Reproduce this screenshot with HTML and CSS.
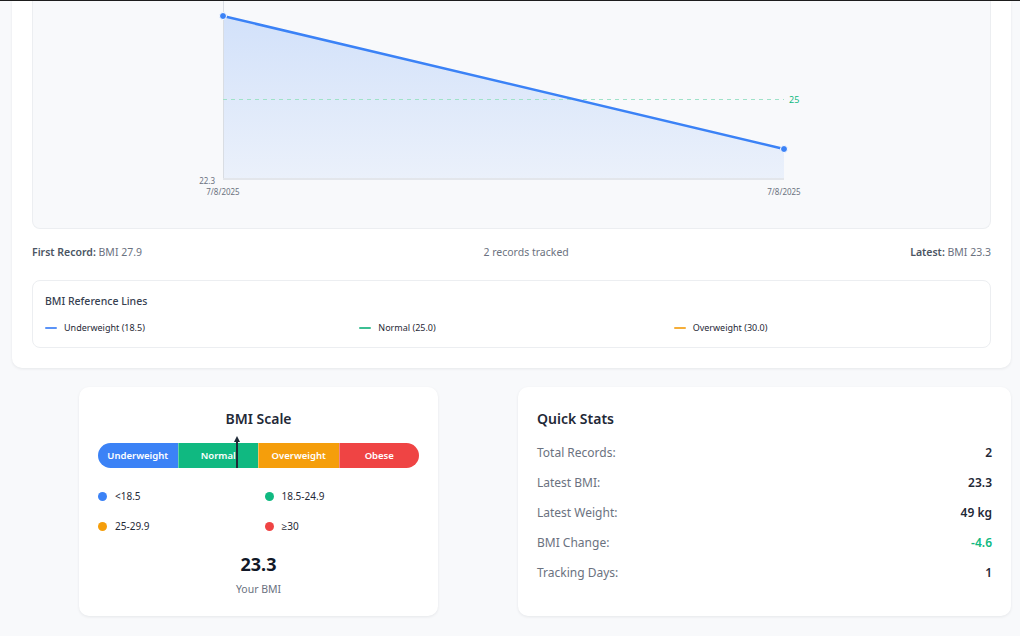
FILE: index.html
```html
<!DOCTYPE html>
<html lang="en">
<head>
<meta charset="utf-8">
<title>BMI Progress</title>
<link rel="stylesheet" href="styles.css">
</head>
<body>
<div class="topbar"></div>
<main class="page">
  <section class="card main-card">
    <div class="chart-box">
      <svg class="chart" width="958" height="227" viewBox="0 0 958 227" xmlns="http://www.w3.org/2000/svg">
        <defs>
          <linearGradient id="fillGrad" x1="0" y1="0" x2="0" y2="1">
            <stop offset="0" stop-color="#3b82f6" stop-opacity="0.2"/>
            <stop offset="1" stop-color="#3b82f6" stop-opacity="0.07"/>
          </linearGradient>
        </defs>
        <polygon points="190,15 751,148 751,177 190,177" fill="url(#fillGrad)"/>
        <line x1="190.5" y1="0" x2="190.5" y2="178" stroke="#d9dde3" stroke-width="1"/>
        <line x1="190" y1="178" x2="751" y2="178" stroke="#e3e6eb" stroke-width="2"/>
        <line x1="190" y1="98.5" x2="751" y2="98.5" stroke="#9fe2c9" stroke-width="1.2" stroke-dasharray="4 4"/>
        <text x="756" y="102" class="ref-label">25</text>
        <polyline points="190,15 751,148" fill="none" stroke="#3b82f6" stroke-width="2.5" stroke-linecap="round"/>
        <circle cx="190" cy="15" r="3.5" fill="#3b82f6" stroke="#ffffff" stroke-width="1"/>
        <circle cx="751" cy="148" r="3.5" fill="#3b82f6" stroke="#ffffff" stroke-width="1"/>
        <text x="182" y="183" class="axis-label" text-anchor="end">22.3</text>
        <text x="190" y="194" class="axis-label" text-anchor="middle">7/8/2025</text>
        <text x="751" y="194" class="axis-label" text-anchor="middle">7/8/2025</text>
      </svg>
    </div>

    <div class="chart-footer">
      <span><strong>First Record:</strong> BMI 27.9</span>
      <span>2 records tracked</span>
      <span><strong>Latest:</strong> BMI 23.3</span>
    </div>

    <div class="ref-box">
      <h4 class="ref-title">BMI Reference Lines</h4>
      <div class="ref-legend">
        <div class="ref-item"><span class="ref-line blue"></span>Underweight (18.5)</div>
        <div class="ref-item"><span class="ref-line green"></span>Normal (25.0)</div>
        <div class="ref-item"><span class="ref-line orange"></span>Overweight (30.0)</div>
      </div>
    </div>
  </section>

  <div class="bottom-grid">
    <section class="card scale-card">
      <h3 class="card-title center">BMI Scale</h3>
      <div class="scale-bar-wrap">
        <div class="scale-bar">
          <div class="seg seg-under">Underweight</div>
          <div class="seg seg-normal">Normal</div>
          <div class="seg seg-over">Overweight</div>
          <div class="seg seg-obese">Obese</div>
        </div>
        <div class="marker" style="left: 43.3%;">
          <span class="marker-head"></span>
          <span class="marker-stem"></span>
        </div>
      </div>
      <div class="scale-legend">
        <div class="leg-item"><span class="dot blue"></span>&lt;18.5</div>
        <div class="leg-item"><span class="dot green"></span>18.5-24.9</div>
        <div class="leg-item"><span class="dot orange"></span>25-29.9</div>
        <div class="leg-item"><span class="dot red"></span>≥30</div>
      </div>
      <div class="your-bmi">23.3</div>
      <div class="your-bmi-label">Your BMI</div>
    </section>

    <section class="card stats-card">
      <h3 class="card-title">Quick Stats</h3>
      <ul class="stats-list">
        <li><span class="stat-label">Total Records:</span><span class="stat-value">2</span></li>
        <li><span class="stat-label">Latest BMI:</span><span class="stat-value">23.3</span></li>
        <li><span class="stat-label">Latest Weight:</span><span class="stat-value">49 kg</span></li>
        <li><span class="stat-label">BMI Change:</span><span class="stat-value positive">-4.6</span></li>
        <li><span class="stat-label">Tracking Days:</span><span class="stat-value">1</span></li>
      </ul>
    </section>
  </div>
</main>
</body>
</html>
```
FILE: styles.css
```css
* { box-sizing: border-box; }

html, body {
  margin: 0;
  padding: 0;
}

body {
  background: #f8f9fb;
  font-family: "Noto Sans", "Open Sans", "Liberation Sans", sans-serif;
  color: #1f2937;
  height: 636px;
  overflow: hidden;
}

.topbar {
  height: 1px;
  background: #1e1e1e;
}

.page {
  padding: 0 9px 0 12px;
}

.card {
  background: #ffffff;
  border-radius: 10px;
  box-shadow: 0 1px 3px rgba(15, 23, 42, 0.08);
}

.main-card {
  border-radius: 0 0 10px 10px;
  padding: 0 20px 20px;
}

.chart-box {
  height: 228px;
  background: #f8f9fb;
  border: 1px solid #eceef1;
  border-top: none;
  border-radius: 0 0 8px 8px;
  overflow: hidden;
}

.chart {
  display: block;
}

.axis-label {
  font-family: "Noto Sans", "Open Sans", sans-serif;
  font-size: 8px;
  fill: #6b7280;
}

.ref-label {
  font-family: "Noto Sans", "Open Sans", sans-serif;
  font-size: 9px;
  fill: #10b981;
}

.chart-footer {
  margin-top: 16px;
  display: flex;
  justify-content: space-between;
  font-size: 10.5px;
  line-height: 14px;
  color: #6b7280;
}

.chart-footer strong {
  color: #4b5563;
  font-weight: 600;
}

.ref-box {
  margin-top: 21px;
  border: 1px solid #eceef1;
  border-radius: 8px;
  padding: 12px;
}

.ref-title {
  margin: 0;
  font-size: 10.5px;
  line-height: 16px;
  font-weight: 500;
  color: #374151;
}

.ref-legend {
  margin-top: 12px;
  display: grid;
  grid-template-columns: repeat(3, 1fr);
  column-gap: 10px;
}

.ref-item {
  display: flex;
  align-items: center;
  gap: 7px;
  font-size: 9px;
  line-height: 14px;
  color: #1f2937;
}

.ref-line {
  display: inline-block;
  width: 12px;
  height: 1.5px;
  border-radius: 1px;
}

.ref-line.blue { background: #5b93f7; }
.ref-line.green { background: #3cbf93; }
.ref-line.orange { background: #f5ae3a; }

.bottom-grid {
  margin-top: 19px;
  display: grid;
  grid-template-columns: 1fr 1fr;
  column-gap: 13px;
}

.scale-card {
  width: 359px;
  justify-self: center;
  padding: 22px 19px 19px;
}

.stats-card {
  padding: 22px 19px 19px;
}

.card-title {
  margin: 0;
  font-size: 14px;
  line-height: 20px;
  font-weight: 600;
  color: #1f2937;
}

.card-title.center {
  text-align: center;
}

.scale-bar-wrap {
  position: relative;
  margin-top: 14px;
}

.scale-bar {
  display: flex;
  height: 25px;
  border-radius: 13px;
  overflow: hidden;
}

.seg {
  flex: 1;
  display: flex;
  align-items: center;
  justify-content: center;
  color: #ffffff;
  font-size: 9.5px;
  font-weight: 600;
}

.seg + .seg {
  border-left: 1px solid rgba(255, 255, 255, 0.35);
}

.seg-under { background: #3b82f6; }
.seg-normal { background: #10b981; }
.seg-over { background: #f59e0b; }
.seg-obese { background: #ef4444; }

.marker {
  position: absolute;
  top: -7px;
  bottom: 0;
  width: 8px;
  margin-left: -4px;
  display: flex;
  flex-direction: column;
  align-items: center;
}

.marker-head {
  width: 0;
  height: 0;
  border-left: 3.5px solid transparent;
  border-right: 3.5px solid transparent;
  border-bottom: 6px solid #1f2937;
}

.marker-stem {
  flex: 1;
  width: 2px;
  background: #1f2937;
}

.scale-legend {
  margin-top: 20px;
  display: grid;
  grid-template-columns: 1fr 1fr;
  column-gap: 12px;
  row-gap: 14px;
}

.leg-item {
  display: flex;
  align-items: center;
  gap: 8px;
  font-size: 10px;
  line-height: 16px;
  color: #1f2937;
}

.dot {
  width: 9px;
  height: 9px;
  border-radius: 50%;
  flex: none;
}

.dot.blue { background: #3b82f6; }
.dot.green { background: #10b981; }
.dot.orange { background: #f59e0b; }
.dot.red { background: #ef4444; }

.your-bmi {
  margin-top: 18px;
  text-align: center;
  font-size: 18px;
  line-height: 24px;
  font-weight: 700;
  color: #111827;
}

.your-bmi-label {
  margin-top: 5px;
  text-align: center;
  font-size: 10.5px;
  line-height: 16px;
  color: #6b7280;
}

.stats-list {
  list-style: none;
  margin: 16px 0 0;
  padding: 0;
  display: flex;
  flex-direction: column;
  gap: 14px;
}

.stats-list li {
  display: flex;
  justify-content: space-between;
  align-items: center;
  line-height: 16px;
  font-size: 12px;
}

.stat-label {
  color: #6b7280;
}

.stat-value {
  color: #1f2937;
  font-weight: 600;
}

.stat-value.positive {
  color: #10b981;
}
```
